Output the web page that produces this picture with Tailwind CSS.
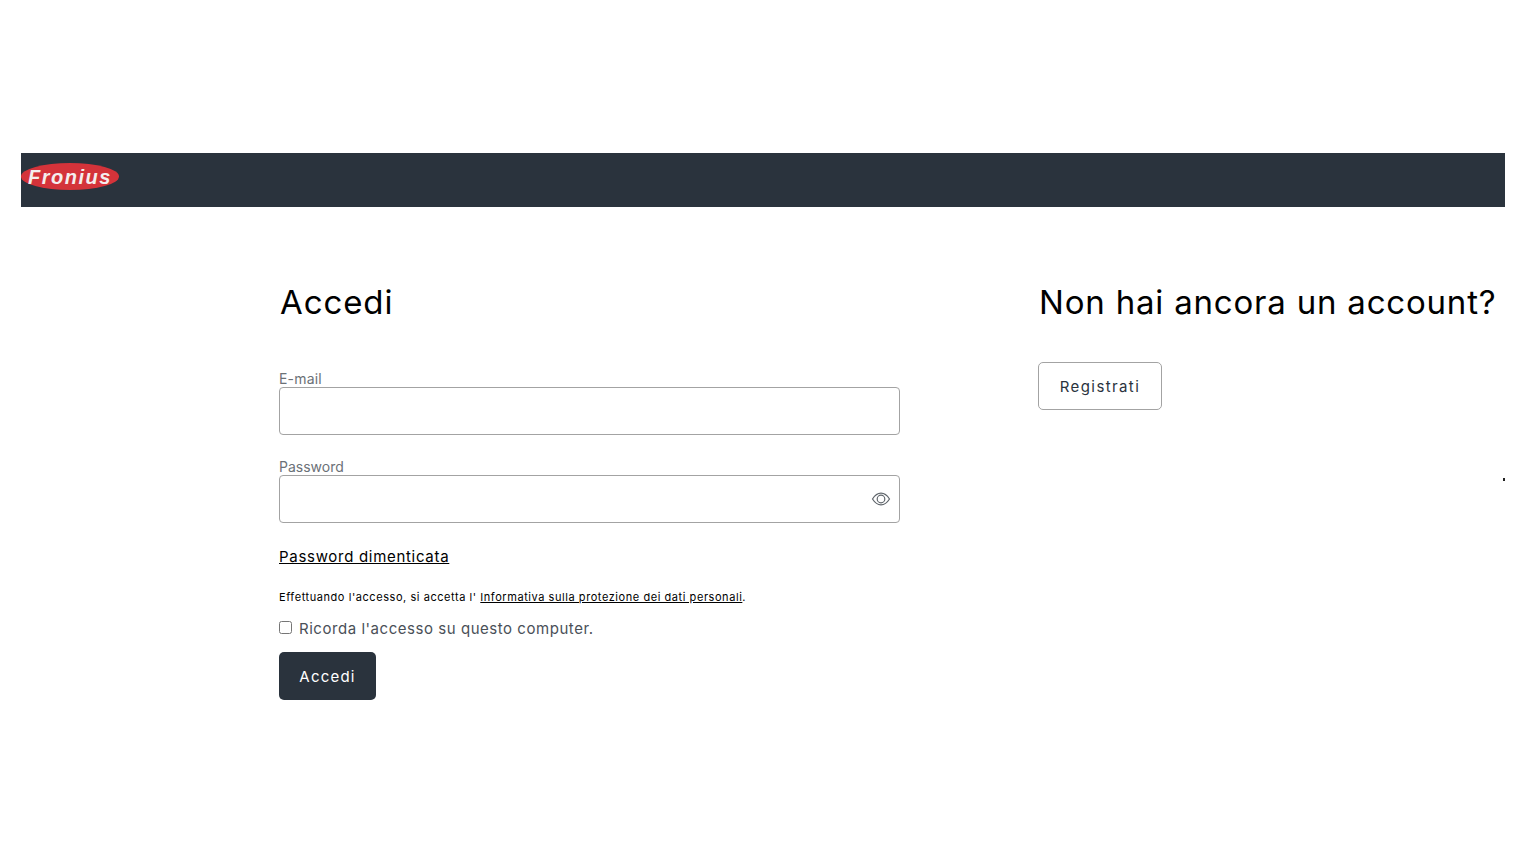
<!doctype html>
<html lang="it">
<head>
<meta charset="utf-8">
<title>Accedi</title>
<script src="https://cdn.jsdelivr.net/npm/@tailwindcss/browser@4"></script>
</head>
<body class="bg-white font-['Inter',sans-serif] overflow-hidden">
<div class="h-[865px] pt-[153px] pl-[21px] pr-[35px] relative">

    <!-- Header -->
    <header class="h-[54px] bg-[#2a333d] flex items-start">
        <div class="mt-[10px] w-[98px] h-[27px] rounded-[50%] bg-[#d4333a] flex items-center justify-center">
            <span class="font-['Liberation_Sans',sans-serif] italic font-bold text-[20px] leading-none tracking-[1.5px] text-[#f4eeee]">Fronius</span>
        </div>
    </header>

    <main class="flex pl-[258px] pt-[75px]">
        <!-- Login -->
        <section class="w-[621px]">
            <h1 class="text-[33px] leading-[40px] text-black pl-[1px] tracking-[0.9px]">Accedi</h1>

            <label class="block mt-[49px] text-[14px] leading-[16px] text-[#6b7177] tracking-[0.2px]">E-mail</label>
            <input type="text" class="block w-full h-[48px] border border-[#a3a3a3] rounded-[4px]">

            <label class="block mt-[24px] text-[14px] leading-[16px] text-[#6b7177]">Password</label>
            <div class="relative">
                <input type="password" class="block w-full h-[48px] border border-[#a3a3a3] rounded-[4px]">
                <svg class="absolute right-[9px] top-[15px]" width="20" height="18" viewBox="0 0 20 18" fill="none" stroke="#5f656b" stroke-width="1.2">
                    <path d="M1.5 9C4 5 6.8 3.2 10 3.2S16 5 18.5 9C16 13 13.2 14.8 10 14.8S4 13 1.5 9Z"/>
                    <circle cx="10" cy="9" r="3.8"/>
                </svg>
            </div>

            <a href="#" class="inline-block mt-[24px] text-[15px] leading-[20px] text-black underline tracking-[0.7px]">Password dimenticata</a>

            <p class="mt-[21px] text-[11px] leading-[16px] text-black tracking-[0.56px]">Effettuando l'accesso, si accetta l' <a href="#" class="underline">Informativa sulla protezione dei dati personali</a>.</p>

            <label class="flex items-start mt-[14px] text-[15px] leading-[20px] text-[#4a5058] tracking-[0.54px]">
                <input type="checkbox" class="w-[13px] h-[13px] mr-[7px] mt-[2px]">
                <span>Ricorda l'accesso su questo computer.</span>
            </label>

            <button class="block mt-[13px] w-[97px] h-[48px] pt-[2px] rounded-[5px] bg-[#2a333d] text-white text-[15px] tracking-[1.2px]">Accedi</button>
        </section>

        <!-- Register -->
        <section class="ml-[138px]">
            <h2 class="text-[33px] leading-[40px] text-black whitespace-nowrap pl-[1px] tracking-[0.8px]">Non hai ancora un account?</h2>
            <button class="block mt-[40px] w-[124px] h-[48px] pt-[2px] rounded-[5px] border border-[#a3a3a3] bg-white text-[#2a333d] text-[15px] tracking-[1.4px]">Registrati</button>
        </section>
    </main>

    <!-- stray mark at right edge -->
    <div class="absolute left-[1503px] top-[478px] w-[2px] h-[3px] bg-[#222]"></div>
</div>
</body>
</html>
